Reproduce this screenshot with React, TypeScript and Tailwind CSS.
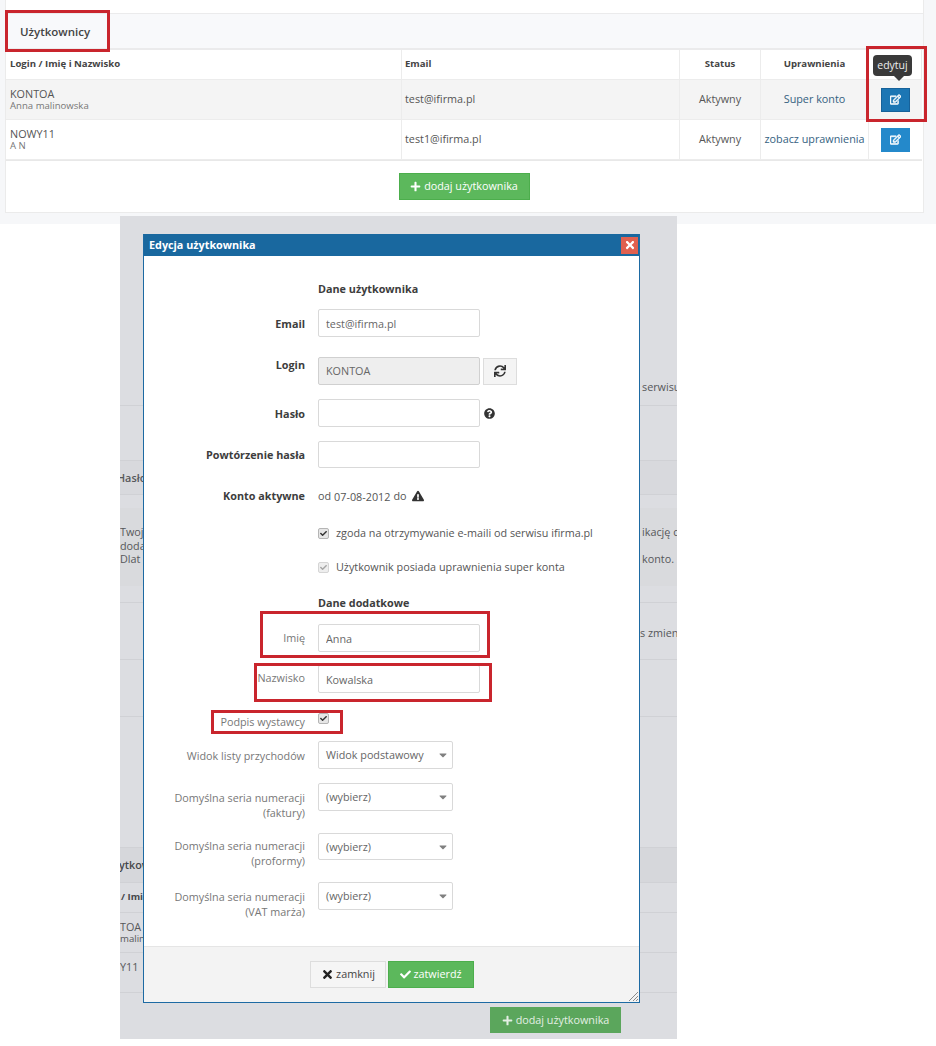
import React from "react";
import { FaCaretDown, FaCheck, FaExclamationTriangle, FaPlus, FaQuestionCircle, FaRegEdit, FaSync, FaTimes } from "react-icons/fa";

const users = [
  { login: "KONTOA", name: "Anna malinowska", email: "test@ifirma.pl", rights: "Super konto", active: true },
  { login: "NOWY11", name: "A N", email: "test1@ifirma.pl", rights: "zobacz uprawnienia", active: false },
];

const Check: React.FC<{ disabled?: boolean }> = ({ disabled }) => (
  <span className={`w-[11px] h-[11px] rounded-[2px] border flex items-center justify-center shrink-0 ${disabled ? "bg-[#eeeeee] border-[#d5d5d5] text-[#a5a5a5]" : "bg-[#e6e6e6] border-[#b5b5b5] text-[#333333]"}`}>
    <FaCheck size={7} />
  </span>
);

const Field: React.FC<{ label: string; value?: string; className: string; labelClass?: string; height?: string }> = ({ label, value, className, labelClass = "font-bold text-[#3d3d3d] pt-[2px]", height = "h-[28px]" }) => (
  <div className={`grid grid-cols-[161px_1fr] gap-x-[13px] items-center ${className}`}>
    <label className={`text-right ${labelClass}`}>{label}</label>
    <input readOnly defaultValue={value} className={`w-[162px] ${height} border border-[#d9d9d9] rounded-[2px] px-[7px] text-[10.8px] text-[#666666] bg-white outline-none`} />
  </div>
);

const Select: React.FC<{ label: string[]; value: string; className: string; height?: string; labelPad?: string; valuePad?: string }> = ({ label, value, className, height = "h-[28px]", labelPad = "pt-[7px]", valuePad = "" }) => (
  <div className={`grid grid-cols-[161px_1fr] gap-x-[13px] items-start text-[#777777] ${height} ${className}`}>
    <div className={`text-right leading-[15px] ${labelPad}`}>
      {label.map((l) => (
        <div key={l}>{l}</div>
      ))}
    </div>
    <div className={`w-[135px] ${height} border border-[#d9d9d9] rounded-[2px] pl-[7px] pr-[3px] flex items-center justify-between text-[#666666]`}>
      <span className={valuePad}>{value}</span>
      <FaCaretDown size={12} className="text-[#808080]" />
    </div>
  </div>
);

const RedBox: React.FC<{ className: string }> = ({ className }) => (
  <div className={`absolute border-[3px] border-[#c9252d] pointer-events-none z-20 ${className}`} />
);

const Backdrop = () => {
  const row = "grid grid-cols-[23px_497px_37px] overflow-hidden border-b border-[#d0d1d5]";
  return (
    <div className="absolute inset-0 flex flex-col text-[10.8px] text-[#56575a] whitespace-nowrap">
      <div className={`${row} h-[190px]`}>
        <span />
        <span />
        <span className="pl-[2px] pt-[163px]">serwisu</span>
      </div>
      <div className={`${row} h-[55px] border-[#c9cacd]`} />
      <div className={`${row} h-[34px] bg-[#d8d9dd]`}>
        <span className="-ml-[3px] pt-[9px] font-semibold">Hasło</span>
      </div>
      <div className="h-[13px]" />
      <div className="grid grid-cols-[23px_497px_37px] overflow-hidden h-[78px] bg-[#d9dadd] leading-[13.5px] pt-[17px]">
        <div>
          <div>Twoj</div>
          <div>doda</div>
          <div>Dlat</div>
        </div>
        <span />
        <div className="pl-[2px]">
          <div>ikację c</div>
          <div>&nbsp;</div>
          <div>konto.</div>
        </div>
      </div>
      <div className={`${row} h-[17px]`} />
      <div className={`${row} h-[57px]`}>
        <span />
        <span />
        <span className="pt-[22px]">s zmien</span>
      </div>
      <div className={`${row} h-[57px]`} />
      <div className={`${row} h-[131px] border-[#c9cacd]`} />
      <div className={`${row} h-[35px] bg-[#d6d7db] border-[#c9cacd]`}>
        <span className="-ml-[1px] pt-[9px] font-semibold text-[#45464a]">ytkownicy</span>
      </div>
      <div className={`${row} h-[30px]`}>
        <span className="pl-[1px] pt-[7px] font-bold text-[9.6px] text-[#45464a]">/ Imię</span>
      </div>
      <div className={`${row} h-[40px] leading-[12px]`}>
        <div className="pt-[8px]">
          <div>TOA</div>
          <div className="text-[9.6px]">malinowska</div>
        </div>
      </div>
      <div className={`${row} h-[40px]`}>
        <span className="pt-[6px]">Y11</span>
      </div>
      <div className="pl-[370px] pt-[14px]">
        <div className="w-[131px] h-[26px] bg-[#5ba65c] text-[#e4efe4] flex items-center justify-center gap-[3px]">
          <FaPlus size={11} />
          dodaj użytkownika
        </div>
      </div>
    </div>
  );
};

export default function App() {
  return (
    <div className="relative w-[936px] h-[1046px] bg-white font-['Open_Sans',sans-serif] text-[10.8px] overflow-hidden">
      <div className="h-[224px] bg-[#f6f7f9] pl-[5px]">
        <div className="w-[919px] h-[213px] bg-white border-b border-x border-[#ebebeb] flex flex-col">
          <div className="mt-[13px] h-[37px] bg-[#f8f9fb] border-t border-b-2 border-[#ebebec] flex items-center pl-[14px] pt-[2px] text-[11.5px] font-semibold text-[#444444]">
            Użytkownicy
          </div>
          <div className="w-[916px] border-r border-b border-[#e8e8e8] grid grid-cols-[396px_278px_81px_108px_53px] text-[#555555]">
            <div className="h-[30px] border-r border-b border-[#ececec] flex items-center pl-[4px] text-[9.6px] font-bold text-[#444444]">Login / Imię i Nazwisko</div>
            <div className="h-[30px] border-r border-b border-[#ececec] flex items-center pl-[3px] text-[9.6px] font-bold text-[#444444]">Email</div>
            <div className="h-[30px] border-r border-b border-[#ececec] flex items-center justify-center text-[9.6px] font-bold text-[#444444]">Status</div>
            <div className="h-[30px] border-r border-b border-[#ececec] flex items-center justify-center text-[9.6px] font-bold text-[#444444]">Uprawnienia</div>
            <div className="h-[30px] border-b border-[#ececec]" />
            {users.map((u) => (
              <React.Fragment key={u.login}>
                <div className={`h-[40px] border-r border-b border-[#ececec] pl-[4px] pb-[1px] flex flex-col justify-center leading-[13px] ${u.active ? "bg-[#f4f4f4]" : "bg-white"}`}>
                  <div>{u.login}</div>
                  <div className="text-[9.6px] leading-[11px] text-[#777777]">{u.name}</div>
                </div>
                <div className={`h-[40px] border-r border-b border-[#ececec] pl-[3px] flex items-center ${u.active ? "bg-[#f4f4f4]" : "bg-white"}`}>{u.email}</div>
                <div className={`h-[40px] border-r border-b border-[#ececec] flex items-center justify-center ${u.active ? "bg-[#f4f4f4]" : "bg-white"}`}>Aktywny</div>
                <div className={`h-[40px] border-r border-b border-[#ececec] flex items-center justify-center whitespace-nowrap text-[#35617f] ${u.active ? "bg-[#f4f4f4]" : "bg-white"}`}>{u.rights}</div>
                <div className={`h-[40px] border-b border-[#ececec] flex items-center justify-center ${u.active ? "bg-[#f4f4f4]" : "bg-white"}`}>
                  <button className={`w-[29px] h-[24px] flex items-center justify-center text-white ${u.active ? "bg-[#1c76b4] border border-[#17629a]" : "bg-[#2489cb]"}`}>
                    <FaRegEdit size={11} className="[stroke-width:30]" />
                  </button>
                </div>
              </React.Fragment>
            ))}
          </div>
          <div className="flex justify-center pt-[12px] pr-[1px]">
            <button className="w-[131px] h-[27px] bg-[#5cb85c] border border-[#4cae4c] text-white flex items-center justify-center gap-[3px]">
              <FaPlus size={11} />
              dodaj użytkownika
            </button>
          </div>
        </div>
      </div>

      <div className="relative ml-[120px] -mt-[8px] w-[557px] h-[823px] bg-[#dcdde1] pl-[23px] pt-[18px]">
        <Backdrop />
        <div className="relative w-[497px] h-[769px] bg-white border border-[#1d6aa3] flex flex-col">
          <div className="h-[22px] -mt-px bg-[#19689f] flex items-center justify-between pl-[5px] pr-[1px] text-white font-bold shrink-0">
            Edycja użytkownika
            <span className="w-[17px] h-[17px] bg-[#e0604f] flex items-center justify-center">
              <FaTimes size={12} />
            </span>
          </div>

          <div className="flex-1 text-[#555555]">
            <div className="mt-[24px] ml-[174px] h-[18px] flex items-center font-bold text-[#3d3d3d]">Dane użytkownika</div>
            <Field className="mt-[11px]" label="Email" value="test@ifirma.pl" />
            <div className="mt-[20px] grid grid-cols-[161px_1fr] gap-x-[13px] items-start">
              <label className="text-right font-bold text-[#3d3d3d]">Login</label>
              <div className="flex items-center gap-[3px]">
                <div className="w-[162px] h-[28px] bg-[#eeeeee] border border-[#d0d0d0] rounded-[2px] px-[7px] flex items-center text-[#666666]">KONTOA</div>
                <button className="w-[34px] h-[27px] bg-[#f4f4f4] border border-[#dddddd] flex items-center justify-center text-[#333333]">
                  <FaSync size={12} />
                </button>
              </div>
            </div>
            <div className="mt-[14px] grid grid-cols-[161px_1fr] gap-x-[13px] items-center">
              <label className="text-right font-bold text-[#3d3d3d] pt-[2px]">Hasło</label>
              <div className="flex items-center gap-[4px]">
                <div className="w-[162px] h-[28px] border border-[#d9d9d9] rounded-[2px]" />
                <FaQuestionCircle size={11} className="text-[#333333]" />
              </div>
            </div>
            <Field className="mt-[14px]" label="Powtórzenie hasła" height="h-[27px]" />
            <div className="mt-[19px] h-[18px] grid grid-cols-[161px_1fr] gap-x-[13px] items-center">
              <label className="text-right font-bold text-[#3d3d3d]">Konto aktywne</label>
              <div className="flex items-center gap-[3px]">
                od
                <span className="mt-[2px]">07-08-2012</span>
                do
                <FaExclamationTriangle size={12} className="text-[#333333] ml-[2px]" />
              </div>
            </div>
            <div className="mt-[19px] ml-[174px] h-[18px] flex items-center gap-[7px]">
              <Check />
              zgoda na otrzymywanie e-maili od serwisu ifirma.pl
            </div>
            <div className="mt-[16px] ml-[174px] h-[18px] flex items-center gap-[7px]">
              <Check disabled />
              Użytkownik posiada uprawnienia super konta
            </div>
            <div className="mt-[18px] ml-[174px] h-[18px] flex items-center font-bold text-[#3d3d3d]">Dane dodatkowe</div>
            <Field className="mt-[12px]" label="Imię" value="Anna" labelClass="text-[#777777]" />
            <Field className="mt-[13px]" label="Nazwisko" value="Kowalska" labelClass="text-[#777777] pb-[1px]" />
            <div className="mt-[19px] h-[18px] grid grid-cols-[161px_1fr] gap-x-[13px] items-center">
              <label className="text-right text-[#777777] pt-[2px]">Podpis wystawcy</label>
              <div className="-mt-[6px]">
                <Check />
              </div>
            </div>
            <Select className="mt-[11px]" label={["Widok listy przychodów"]} value="Widok podstawowy" />
            <Select className="mt-[14px]" label={["Domyślna seria numeracji", "(faktury)"]} value="(wybierz)" />
            <Select className="mt-[22px]" label={["Domyślna seria numeracji", "(proformy)"]} value="(wybierz)" height="h-[27px]" labelPad="pt-[5px]" valuePad="pt-[1px]" />
            <Select className="mt-[22px]" label={["Domyślna seria numeracji", "(VAT marża)"]} value="(wybierz)" valuePad="pt-[1px]" />
          </div>

          <div className="relative h-[56px] bg-[#f3f3f3] border-t border-[#e5e5e5] pl-[166px] pt-[14px] flex items-start gap-[2px] shrink-0">
            <button className="w-[76px] h-[27px] bg-[#f5f5f5] border border-[#dddddd] flex items-center justify-center gap-[2px] text-[#444444]">
              <FaTimes size={13} className="text-[#222222]" />
              zamknij
            </button>
            <button className="w-[86px] h-[27px] bg-[#5cb85c] border border-[#4cae4c] flex items-center justify-center gap-[2px] text-white">
              <FaCheck size={11} />
              zatwierdź
            </button>
            <svg className="absolute right-0 bottom-0" width="11" height="11" viewBox="0 0 11 11" stroke="#8a8a8a" strokeWidth="1">
              <path d="M1 10 10 1M5 10l5-5M8 10l2-2" />
            </svg>
          </div>
        </div>
      </div>

      <div className="absolute left-[873px] top-[55px] w-[39px] h-[21px] rounded-[4px] bg-[#3a3a3a] text-[#eeeeee] text-[10.5px] flex items-center justify-center z-10">
        edytuj
        <span className="absolute left-[21px] top-full border-x-[5px] border-x-transparent border-t-[5px] border-t-[#3a3a3a]" />
      </div>

      <RedBox className="left-[5px] top-[10px] w-[105px] h-[42px]" />
      <RedBox className="left-[866px] top-[46px] w-[61px] h-[76px]" />
      <RedBox className="left-[260px] top-[611px] w-[230px] h-[47px]" />
      <RedBox className="left-[254px] top-[663px] w-[238px] h-[39px]" />
      <RedBox className="left-[211px] top-[710px] w-[132px] h-[24px]" />
    </div>
  );
}
